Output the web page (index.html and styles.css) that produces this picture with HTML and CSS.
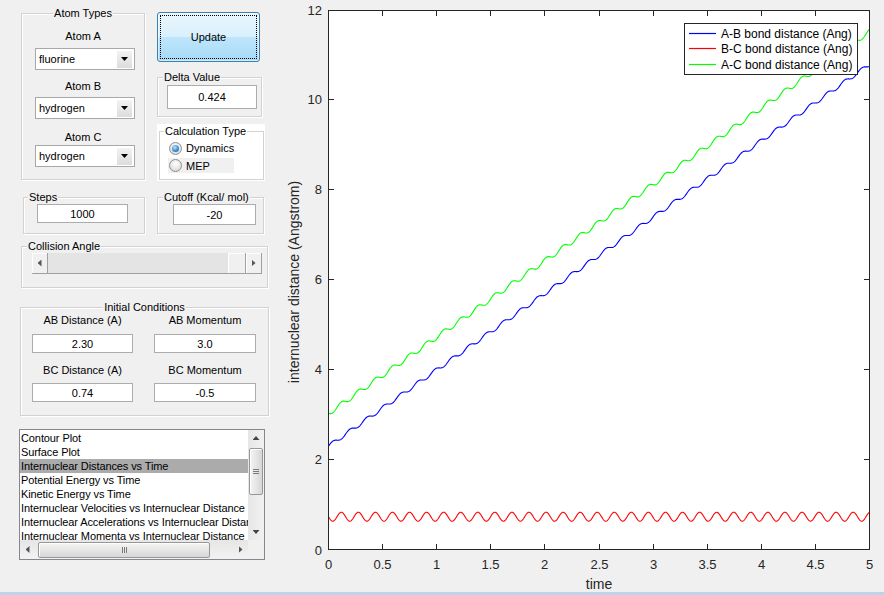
FILE: index.html
```html
<!DOCTYPE html>
<html>
<head>
<meta charset="utf-8">
<title>Reaction Dynamics</title>
<link rel="stylesheet" href="styles.css">
</head>
<body>
<div class="app">
  <div class="panel">
    <div class="row r1">
      <div class="group g-atoms">
        <div class="title center">Atom Types</div>
        <div class="lbl l-a">Atom A</div>
        <div class="select s-a"><span>fluorine</span><span class="drop"></span></div>
        <div class="lbl l-b">Atom B</div>
        <div class="select s-b"><span>hydrogen</span><span class="drop"></span></div>
        <div class="lbl l-c">Atom C</div>
        <div class="select s-c"><span>hydrogen</span><span class="drop"></span></div>
      </div>
      <div class="col-right">
        <div class="update"><span class="focus">Update</span></div>
        <div class="group g-delta">
          <div class="title t5">Delta Value</div>
          <div class="edit e-delta">0.424</div>
        </div>
        <div class="calc-bg">
          <div class="group g-calc">
            <div class="title t4 white">Calculation Type</div>
            <div class="opt opt-dyn"><span class="radio on"></span>Dynamics</div>
            <div class="opt opt-mep"><span class="radio"></span>MEP</div>
          </div>
        </div>
      </div>
    </div>

    <div class="row r2">
      <div class="group g-steps">
        <div class="title t4">Steps</div>
        <div class="edit e-steps">1000</div>
      </div>
      <div class="group g-cutoff">
        <div class="title t5">Cutoff (Kcal/ mol)</div>
        <div class="edit e-cutoff">-20</div>
      </div>
    </div>

    <div class="row r3">
      <div class="group g-coll">
        <div class="title t5">Collision Angle</div>
        <div class="slider">
          <span class="sl-btn"><span class="arr-l"></span></span>
          <span class="sl-track"></span>
          <span class="sl-thumb"></span>
          <span class="sl-btn"><span class="arr-r"></span></span>
        </div>
      </div>
    </div>

    <div class="row r4">
      <div class="group g-init">
        <div class="title center">Initial Conditions</div>
        <div class="ic-grid">
          <div class="ic-lbl">AB Distance (A)</div>
          <div class="ic-lbl">AB Momentum</div>
          <div class="edit ic-edit">2.30</div>
          <div class="edit ic-edit">3.0</div>
          <div class="ic-lbl ic-lbl2">BC Distance (A)</div>
          <div class="ic-lbl ic-lbl2">BC Momentum</div>
          <div class="edit ic-edit ic-edit2">0.74</div>
          <div class="edit ic-edit ic-edit2">-0.5</div>
        </div>
      </div>
    </div>

    <div class="row r5">
      <div class="listbox">
        <div class="items">
          <div class="item">Contour Plot</div>
          <div class="item">Surface Plot</div>
          <div class="item sel">Internuclear Distances vs Time</div>
          <div class="item">Potential Energy vs Time</div>
          <div class="item">Kinetic Energy vs Time</div>
          <div class="item">Internuclear Velocities vs Internuclear Distance</div>
          <div class="item">Internuclear Accelerations vs Internuclear Distance</div>
          <div class="item">Internuclear Momenta vs Internuclear Distance</div>
        </div>
        <div class="vscroll">
          <span class="sb-cell"><span class="arr-u"></span></span>
          <span class="vthumb"><span class="grip-v"></span></span>
          <span class="sb-fill"></span>
          <span class="sb-cell"><span class="arr-d"></span></span>
        </div>
        <div class="hscroll">
          <span class="sb-cell"><span class="arr-l2"></span></span>
          <span class="hthumb"><span class="grip-h"></span></span>
          <span class="sb-fill"></span>
          <span class="sb-cell"><span class="arr-r2"></span></span>
        </div>
        <div class="corner"></div>
      </div>
    </div>
  </div>

  <svg class="plot" viewBox="270 0 614 592" xmlns="http://www.w3.org/2000/svg">
    <rect x="328.5" y="10.5" width="541" height="539" fill="#fff" stroke="none"/>
    <polyline id="bc" class="curve" stroke="#ff0000" points=""/>
    <polyline id="ab" class="curve" stroke="#0000ff" points=""/>
    <polyline id="ac" class="curve" stroke="#00ff00" points=""/>
    <rect x="328.5" y="10.5" width="541" height="539" fill="none" stroke="#262626"/>
    <path class="ticks" d="M382.5 549V544M436.5 549V544M490.5 549V544M544.5 549V544M599.5 549V544M653.5 549V544M707.5 549V544M761.5 549V544M815.5 549V544
      M382.5 11V16M436.5 11V16M490.5 11V16M544.5 11V16M599.5 11V16M653.5 11V16M707.5 11V16M761.5 11V16M815.5 11V16
      M329 459.5H334M329 369.5H334M329 279.5H334M329 189.5H334M329 99.5H334
      M869 459.5H864M869 369.5H864M869 279.5H864M869 189.5H864M869 99.5H864"/>
    <g class="tick-lbl yt">
      <text x="322" y="555">0</text>
      <text x="322" y="464">2</text>
      <text x="322" y="374">4</text>
      <text x="322" y="284">6</text>
      <text x="322" y="194">8</text>
      <text x="322" y="104">10</text>
      <text x="322" y="15">12</text>
    </g>
    <g class="tick-lbl xt">
      <text x="328.5" y="569">0</text>
      <text x="382.5" y="569">0.5</text>
      <text x="436.5" y="569">1</text>
      <text x="490.5" y="569">1.5</text>
      <text x="544.5" y="569">2</text>
      <text x="599.5" y="569">2.5</text>
      <text x="653.5" y="569">3</text>
      <text x="707.5" y="569">3.5</text>
      <text x="761.5" y="569">4</text>
      <text x="815.5" y="569">4.5</text>
      <text x="869.5" y="569">5</text>
    </g>
    <text class="axis-lbl" x="599" y="589" text-anchor="middle">time</text>
    <text class="axis-lbl" transform="translate(299 282) rotate(-90)" text-anchor="middle">internuclear distance (Angstrom)</text>
    <g class="legend">
      <rect x="684.5" y="23.5" width="173" height="51" fill="#fff" stroke="#262626"/>
      <line class="lg-line" x1="689" y1="33.5" x2="716" y2="33.5" stroke="#0000ff"/>
      <line class="lg-line" x1="689" y1="48.5" x2="716" y2="48.5" stroke="#ff0000"/>
      <line class="lg-line" x1="689" y1="64.5" x2="716" y2="64.5" stroke="#00ff00"/>
      <text x="721" y="38">A-B bond distance (Ang)</text>
      <text x="721" y="53">B-C bond distance (Ang)</text>
      <text x="721" y="69">A-C bond distance (Ang)</text>
    </g>
  </svg>
</div>
<div class="strip"></div>
<script src="script.js"></script>
</body>
</html>
```

FILE: styles.css
```css
* { box-sizing: border-box; }
html, body { margin: 0; padding: 0; }
body {
  width: 884px;
  height: 595px;
  overflow: hidden;
  background: #f0f0f0;
  font-family: "Liberation Sans", Arial, sans-serif;
  font-size: 11px;
  color: #000;
}
.app { display: flex; height: 592px; }
.panel { width: 270px; flex: none; }
.strip { height: 3px; background: #bcd3ec; }
.plot { display: block; width: 614px; height: 592px; flex: none; }

/* rows */
.row { display: flex; align-items: flex-start; }
.r2 { margin-top: 16px; }
.r3 { margin-top: 12px; }
.r4 { margin-top: 19px; }
.r5 { margin-top: 13px; }

/* group boxes */
.group {
  border: 1px solid #d2d2d2;
  box-shadow: 1px 1px 0 #fff, inset 1px 1px 0 #fff;
}
.title {
  line-height: 13px;
  height: 13px;
  margin-top: -7px;
  padding: 0 1px;
  width: max-content;
  background: #f0f0f0;
  white-space: nowrap;
}
.title.center { margin-left: auto; margin-right: auto; }
.title.t4 { margin-left: 4px; }
.title.t5 { margin-left: 5px; }
.title.white { background: #fff; }

.lbl { line-height: 13px; height: 13px; text-align: center; }

/* atom types */
.g-atoms { margin: 13px 0 0 21px; width: 124px; height: 167px; }
.l-a { margin-top: 10px; }
.l-b { margin-top: 10px; }
.l-c { margin-top: 12px; }
.s-a { margin-top: 5px; }
.s-b { margin-top: 4px; }
.s-c { margin-top: 1px; }

.select {
  display: flex;
  align-items: center;
  justify-content: space-between;
  width: 100px;
  height: 22px;
  margin-left: 13px;
  padding: 0 2px 0 3px;
  background: #fff;
  border: 1px solid #a8a8a8;
}
.drop {
  width: 15px;
  height: 17px;
  display: flex;
  align-items: center;
  justify-content: center;
  background: linear-gradient(#f3f3f3, #dcdcdc);
}
.drop::after {
  content: "";
  width: 7px;
  height: 4px;
  background: #000;
  clip-path: polygon(0 0, 100% 0, 50% 100%);
}

/* right column */
.col-right { margin: 12px 0 0 12px; width: 108px; }
.update {
  width: 103px;
  height: 50px;
  border: 1px solid #3c7fb1;
  border-radius: 3px;
  padding: 2px;
  background: linear-gradient(#eaf6fd 0%, #d9f0fc 50%, #bee6fd 50%, #a7d9f5 100%);
  box-shadow: inset 0 0 0 1px rgba(255,255,255,0.5);
}
.focus {
  display: flex;
  align-items: center;
  justify-content: center;
  height: 100%;
  border: 1px dotted #000;
}
.g-delta { margin-top: 15px; width: 105px; height: 40px; }

.edit {
  display: flex;
  align-items: center;
  justify-content: center;
  height: 19px;
  background: #fff;
  border: 1px solid #acacac;
}
.e-delta { margin: 1px 0 0 9px; width: 90px; height: 24px; }

.calc-bg {
  margin-top: 7px;
  width: 108px;
  height: 57px;
  background: #fff;
  padding: 7px 1px 1px 2px;
}
.g-calc { width: 105px; height: 49px; }
.opt {
  display: flex;
  align-items: center;
  gap: 4px;
  width: 66px;
  margin-left: 8px;
  padding-left: 1px;
}
.opt-dyn { margin-top: 3px; height: 14px; }
.opt-mep { margin-top: 3px; height: 15px; background: #f0f0f0; }
.radio {
  flex: none;
  width: 13px;
  height: 13px;
  border-radius: 50%;
  border: 1px solid #8e8f8f;
  background: radial-gradient(circle at 50% 35%, #ffffff, #e6e6e6 55%, #cfcfcf);
  display: flex;
  align-items: center;
  justify-content: center;
}
.radio.on::after {
  content: "";
  width: 7px;
  height: 7px;
  border-radius: 50%;
  background: radial-gradient(circle at 40% 35%, #b9e4fd, #3e8fd0 55%, #1a4f86);
}

/* steps / cutoff */
.g-steps { margin-left: 23px; width: 122px; height: 37px; }
.e-steps { margin-left: 13px; width: 91px; }
.g-cutoff { margin-left: 12px; width: 107px; height: 37px; }
.e-cutoff { margin-left: 15px; width: 83px; height: 21px; }

/* collision angle */
.g-coll { margin-left: 21px; width: 247px; height: 42px; }
.slider {
  display: flex;
  margin-left: 10px;
  width: 230px;
  height: 21px;
  background: #e4e4e4;
  border-bottom: 1px solid #a0a0a0;
}
.sl-btn {
  flex: none;
  width: 16px;
  height: 20px;
  background: #f0f0f0;
  border-right: 1px solid #a0a0a0;
  box-shadow: inset 1px 1px 0 #fff;
  display: flex;
  align-items: center;
  justify-content: center;
}
.sl-track { flex: 1; }
.sl-thumb {
  flex: none;
  width: 18px;
  height: 20px;
  background: #f0f0f0;
  border-right: 1px solid #a0a0a0;
  box-shadow: inset 1px 1px 0 #fff;
}
.arr-l, .arr-r, .arr-l2, .arr-r2 { width: 4px; height: 7px; background: #555; }
.arr-l, .arr-l2 { clip-path: polygon(100% 0, 0 50%, 100% 100%); }
.arr-r, .arr-r2 { clip-path: polygon(0 0, 100% 50%, 0 100%); }
.arr-u, .arr-d { width: 7px; height: 4px; background: #444; }
.arr-u { clip-path: polygon(50% 0, 100% 100%, 0 100%); }
.arr-d { clip-path: polygon(0 0, 100% 0, 50% 100%); }

/* initial conditions */
.g-init { margin-left: 20px; width: 249px; height: 109px; }
.ic-grid {
  display: grid;
  grid-template-columns: 101px 102px;
  column-gap: 21px;
  margin-left: 11px;
}
.ic-lbl { line-height: 13px; height: 13px; text-align: center; white-space: nowrap; }
.ic-edit { margin-top: 7px; }
.ic-lbl2 { margin-top: 11px; }
.ic-edit2 { margin-top: 6px; }

/* listbox */
.listbox {
  margin-left: 19px;
  width: 246px;
  height: 131px;
  border: 1px solid #828790;
  background: #fff;
  display: grid;
  grid-template-columns: 228px 16px;
  grid-template-rows: 110px 19px;
}
.items { overflow: hidden; padding-top: 1px; }
.item {
  height: 14px;
  line-height: 14px;
  padding-left: 1px;
  white-space: nowrap;
  overflow: hidden;
  letter-spacing: -0.1px;
}
.item.sel { background: #ababab; }
.vscroll {
  display: flex;
  flex-direction: column;
  align-items: center;
  background: linear-gradient(90deg, #e6e6e6, #f2f2f2);
}
.sb-cell {
  flex: none;
  width: 16px;
  height: 16px;
  display: flex;
  align-items: center;
  justify-content: center;
}
.hscroll .sb-cell { width: 15px; height: 19px; }
.sb-fill { flex: 1; }
.vthumb {
  flex: none;
  margin-top: 2px;
  width: 14px;
  height: 47px;
  border: 1px solid #979797;
  border-radius: 2px;
  background: linear-gradient(90deg, #f5f5f5, #e6e6e6 50%, #d6d6d6);
  box-shadow: inset 1px 1px 0 #fff;
  display: flex;
  align-items: center;
  justify-content: center;
}
.grip-v {
  width: 6px;
  height: 1px;
  margin-top: -4px;
  background: #7a7a7a;
  box-shadow: 0 2px 0 #7a7a7a, 0 4px 0 #7a7a7a;
}
.hscroll {
  display: flex;
  align-items: center;
  background: linear-gradient(#e6e6e6, #f2f2f2);
}
.hthumb {
  flex: none;
  margin-left: 3px;
  width: 172px;
  height: 16px;
  border: 1px solid #979797;
  border-radius: 2px;
  background: linear-gradient(#f5f5f5, #e6e6e6 50%, #d6d6d6);
  box-shadow: inset 1px 1px 0 #fff;
  display: flex;
  align-items: center;
  justify-content: center;
}
.grip-h {
  width: 1px;
  height: 6px;
  margin-left: -4px;
  background: #7a7a7a;
  box-shadow: 2px 0 0 #7a7a7a, 4px 0 0 #7a7a7a;
}
.corner { background: #f0f0f0; }

/* plot */
.plot text { font-family: "Liberation Sans", Arial, sans-serif; fill: #262626; }
.tick-lbl { font-size: 13px; }
.yt text { text-anchor: end; }
.xt text { text-anchor: middle; }
.axis-lbl { font-size: 14px; }
.legend text { font-size: 12px; fill: #000; }
.ticks { stroke: #262626; fill: none; }
.lg-line { stroke-width: 1.2; fill: none; }
.curve { fill: none; stroke-width: 1.1; stroke-linejoin: round; }
```

FILE: script.js
```js
(function () {
  var T = 0.1577, w = 2 * Math.PI / T;
  function X(t) { return 328.5 + t * 541 / 5; }
  function Y(v) { return 549.5 - v * 539 / 12; }
  var ab = [], bc = [], ac = [];
  for (var i = 0; i <= 1000; i++) {
    var t = i * 0.005;
    var s = Math.sin(w * t);
    var r = 0.73 - 0.1 * s;
    var a = 2.3 + 1.70 * t + 0.045 * s;
    var c = a + r;
    var x = X(t).toFixed(2);
    ab.push(x + ',' + Y(a).toFixed(2));
    bc.push(x + ',' + Y(r).toFixed(2));
    ac.push(x + ',' + Y(c).toFixed(2));
  }
  document.getElementById('ab').setAttribute('points', ab.join(' '));
  document.getElementById('bc').setAttribute('points', bc.join(' '));
  document.getElementById('ac').setAttribute('points', ac.join(' '));
})();
```
